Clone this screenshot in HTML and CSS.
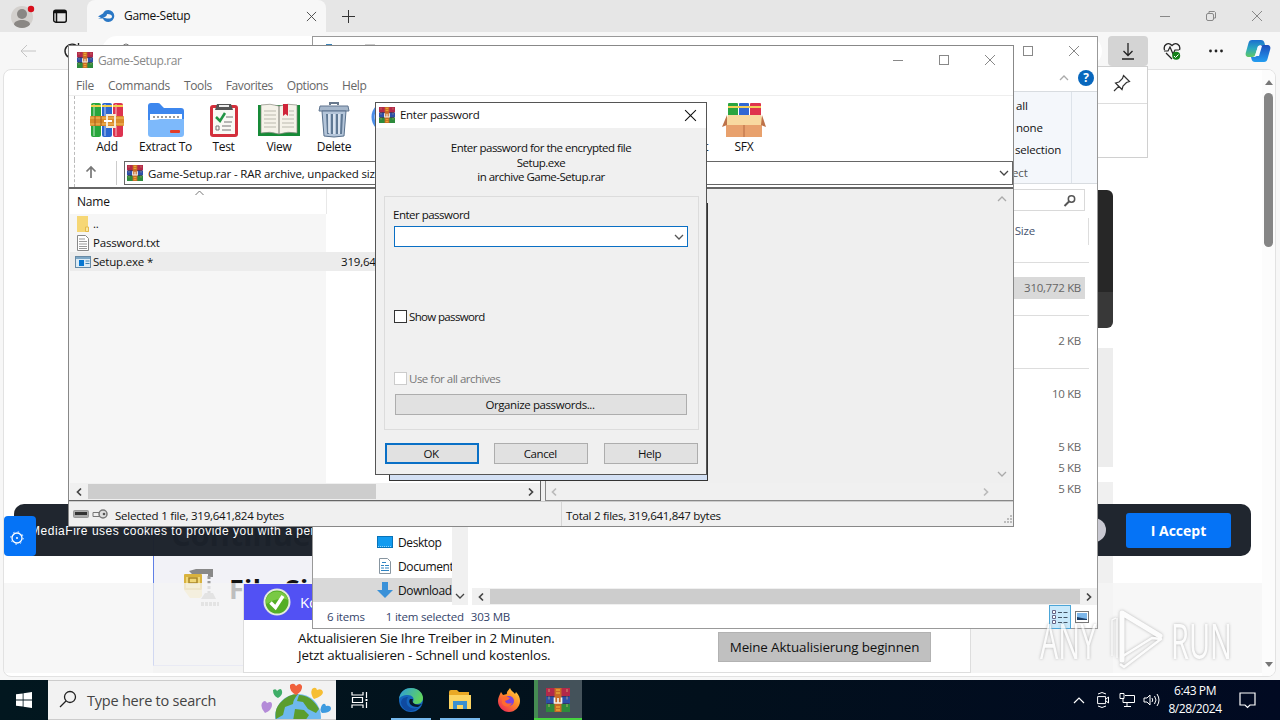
FILE: index.html
```html
<!DOCTYPE html>
<html lang="en">
<head>
  <meta charset="UTF-8">
  <meta name="viewport" content="width=device-width, initial-scale=1.0">
  <title>Game-Setup</title>
  <link rel="stylesheet" href="styles.css">
</head>
<body>
  <!-- shared icons -->
  <svg class="defs" width="0" height="0">
    <symbol id="rar" viewBox="0 0 24 24">
      <rect x="1" y="1" width="22" height="22" fill="#3a2330"/>
      <rect x="0" y="0" width="24" height="8" fill="#b3294a"/>
      <rect x="0" y="8.5" width="24" height="7" fill="#2d4fa8"/>
      <rect x="0" y="16" width="24" height="8" fill="#2d8a3c"/>
      <path d="M3 1v22M21 1v22" stroke="#e0c47a" stroke-opacity=".7" stroke-width="1" stroke-dasharray="3 4.5"/>
      <rect x="8.500" y="0" width="7" height="24" fill="#c96a25"/>
      <path d="M10 2h4M10 5h4M10 19h4M10 22h4" stroke="#f7c13c" stroke-width="1.2"/>
      <path d="M8.500 9.500v5.500h7V9.500M12 10v5" fill="none" stroke="#f4efe6" stroke-width="1.700"/>
    </symbol>
    <symbol id="close" viewBox="0 0 12 12"><path d="M1 1l10 10M11 1L1 11" fill="none" stroke="currentColor"/></symbol>
    <symbol id="max" viewBox="0 0 12 12"><rect x="1.5" y="1.5" width="9" height="9" fill="none" stroke="currentColor"/></symbol>
    <symbol id="min" viewBox="0 0 12 12"><path d="M1 6.5h10" stroke="currentColor"/></symbol>
    <symbol id="left" viewBox="0 0 12 12"><path d="M8 2.5L4.500 6 8 9.500" fill="none" stroke="currentColor" stroke-width="1.700"/></symbol>
    <symbol id="right" viewBox="0 0 12 12"><path d="M4 2.500L7.500 6 4 9.500" fill="none" stroke="currentColor" stroke-width="1.700"/></symbol>
    <symbol id="up" viewBox="0 0 12 12"><path d="M2 8l4-4 4 4" fill="none" stroke="currentColor" stroke-width="1.300"/></symbol>
    <symbol id="down" viewBox="0 0 12 12"><path d="M2 4l4 4 4-4" fill="none" stroke="currentColor" stroke-width="1.300"/></symbol>
  </svg>

  <div class="desktop">
    <!-- browser -->
    <div class="browser">
      <div class="tabstrip">
        <svg class="avatar" width="26" height="26" viewBox="0 0 26 26">
          <circle cx="12" cy="14" r="11" fill="#d3d0cd"/><circle cx="12" cy="11" r="5" fill="#8a8784"/>
          <path d="M4 21.500c0-6 16-6 16 0-3 4.500-13 4.500-16 0z" fill="#8a8784"/>
          <circle cx="21" cy="6" r="3.200" fill="#d80f1c"/>
        </svg>
        <svg class="tab-menu" width="16" height="16" viewBox="0 0 16 16"><rect x="1.700" y="2.200" width="12.600" height="12" rx="2" fill="none" stroke="#111" stroke-width="1.400"/><path d="M2 4.500h12M4.500 4v10" stroke="#111" stroke-width="1.500"/><path d="M2 3.500h12" stroke="#111" stroke-width="2"/></svg>
        <div class="tab">
          <svg width="17" height="14" viewBox="0 0 17 14"><path d="M0 7.500L5 4.500C6 2 8 1 10.300 1a6 6 0 0 1 0 12C7.500 13 6 11.500 5 9.500H0l3-1z" fill="#2b78c5"/><path d="M5 8.500q4-1 4-3.500 5 0 5 2.500T9 9.500z" fill="#f7f7f7"/></svg>
          <span class="tab-title">Game-Setup</span>
          <svg class="tab-close" width="11" height="11"><use href="#close"/></svg>
        </div>
        <svg class="new-tab" width="15" height="15" viewBox="0 0 15 15"><path d="M7.500 1v13M1 7.500h13" stroke="#333"/></svg>
        <div class="controls browser-controls">
          <svg width="12" height="12"><use href="#min"/></svg>
          <svg width="12" height="12" viewBox="0 0 12 12"><rect x="1.500" y="3.500" width="7" height="7" rx="1.500" fill="none" stroke="currentColor"/><path d="M4 3V1.500h5.500l1 1V8H9" fill="none" stroke="currentColor"/></svg>
          <svg width="12" height="12"><use href="#close"/></svg>
        </div>
      </div>
      <div class="toolbar">
        <svg class="back" width="16" height="14" viewBox="0 0 16 14"><path d="M16 7H1M7 1L1 7l6 6" fill="none" stroke="#c4c4c4"/></svg>
        <svg class="reload" width="18" height="18" viewBox="0 0 18 18"><path d="M15 5.500A7 7 0 1 0 16 9M15.500 1v5h-5" fill="none" stroke="#222" stroke-width="1.400"/></svg>
        <div class="address"><svg width="10" height="12" viewBox="0 0 10 12"><path d="M2 6V4a3 3 0 0 1 6 0v2M1 6h8v5H1z" fill="none" stroke="#777"/></svg></div>
        <div class="tools">
          <span class="tool-active"><svg width="16" height="20" viewBox="0 0 16 20"><path d="M8 2v12M3.500 10L8 14.500 12.500 10M2 18h12" fill="none" stroke="#222" stroke-width="1.300"/></svg></span>
          <svg class="heart" width="18" height="18" viewBox="0 0 18 18"><path d="M1.500 8C0 3 5-.5 9 3.500 13-.5 18 3 16.500 8M3 11l6 6" fill="none" stroke="#222" stroke-width="1.300"/><path d="M1 9h4l2-4 3 7 2-4h4" fill="none" stroke="#222" stroke-width="1.200"/><circle cx="13.200" cy="13.800" r="4" fill="#13801a"/><path d="M11 14l1.500 1.500 3-3" fill="none" stroke="#fff"/></svg>
          <svg class="dots" width="16" height="6" viewBox="0 0 16 6"><g fill="#222"><circle cx="2.500" cy="3" r="1.400"/><circle cx="8" cy="3" r="1.400"/><circle cx="13.500" cy="3" r="1.400"/></g></svg>
          <svg class="copilot" width="26" height="24" viewBox="0 0 26 24">
            <defs><linearGradient id="cp1" x2="0" y2="1"><stop stop-color="#1a6fd0"/><stop offset=".5" stop-color="#2aa8c0"/><stop offset="1" stop-color="#61c864"/></linearGradient><linearGradient id="cp2" x2="0" y2="1"><stop stop-color="#1b4dbb"/><stop offset="1" stop-color="#239df0"/></linearGradient></defs>
            <path d="M7 1h9c2 0 3 1 3.500 3l.5 2h-4c-2 0-3 1-3.500 3l-2 6c-.5 2-1.500 3-3.500 3H4c-3 0-4-2-3-5L3.500 4C4 2 5 1 7 1z" fill="url(#cp1)"/>
            <path d="M19 23h-9c-2 0-3-1-3.500-3L6 18h3c2 0 3-1 3.500-3l2-6c.5-2 1.500-3 3.500-3h4c3 0 4 2 3 5l-2.500 9c-.5 2-1.500 3-3.500 3z" fill="url(#cp2)"/>
            <path d="M13 7h4l-3 10h-4z" fill="#f5f9ff"/>
          </svg>
        </div>
      </div>
      <div class="viewport">
        <div class="page">
          <div class="hero"></div>
          <div class="side-panel"></div>
          <div class="download-card">
            <h2>Continue</h2>
            <div class="file-row">
              <svg width="40" height="38" viewBox="0 0 40 38"><path d="M7 2L14 0h17v8h-5V5H10z" fill="#888"/><rect x="2" y="5" width="18" height="16" rx="1" fill="#d9b23e"/><rect x="4" y="8" width="14" height="11" fill="#f0d778"/><rect x="7" y="9" width="8" height="5" fill="none" stroke="#a98627" stroke-width="1.500"/><path d="M2 21h18v6l-2 2H8z" fill="#f0dc98"/><path d="M27 7v18" stroke="#999" stroke-width="3" stroke-dasharray="3 2"/><path d="M23 24h8l3 6H19z" fill="#aaa"/><path d="M19 35h18" stroke="#aaa" stroke-width="4" stroke-dasharray="3 1"/></svg>
              <strong>File Size</strong>
            </div>
          </div>
          <div class="page-footer"></div>
        </div>
        <div class="page-scroll"><i class="tri-up"></i><b></b><i class="tri-down"></i></div>
      </div>
      <div class="downloads"><svg width="18" height="18" viewBox="0 0 18 18"><path d="M10.500 1.500l6 6-3 1-3.500 3.500-1 3.500-6.500-6.500 3.500-1L9.500 4.500zM5.700 12.300L1 17" fill="none" stroke="#333" stroke-width="1.200"/></svg></div>
      <div class="cookie">
        <p>MediaFire uses cookies to provide you with a personalized</p>
        <span class="cookie-more">:</span>
        <button>I Accept</button>
      </div>
      <div class="gear"><svg width="14" height="14" viewBox="0 0 14 14"><circle cx="7" cy="7" r="5" fill="none" stroke="#fff" stroke-width="1.300"/><circle cx="7" cy="7" r="6.200" fill="none" stroke="#fff" stroke-dasharray="1.500 3.370"/><circle cx="7" cy="7" r="1" fill="#fff"/></svg></div>
      <div class="advert">
        <div class="advert-head">
          <svg width="28" height="28" viewBox="0 0 28 28"><circle cx="14" cy="14" r="12.500" fill="#54ae26" stroke="#e4eadf" stroke-width="2"/><path d="M2.500 12a12 12 0 0 1 23 0c-7-3-16 0-22 4z" fill="#79c944"/><path d="M7.500 14.500l5 5L20 8" fill="none" stroke="#fff" stroke-width="3.500"/></svg>
          <span>Kostenlos</span>
        </div>
        <div class="advert-body">
          <p>Aktualisieren Sie Ihre Treiber in 2 Minuten.<br>Jetzt aktualisieren - Schnell und kostenlos.</p>
          <button>Meine Aktualisierung beginnen</button>
        </div>
      </div>
    </div>

    <!-- file explorer -->
    <div class="explorer">
      <div class="ex-title">
        <svg class="ex-icons" width="90" height="14" viewBox="0 0 90 14"><path d="M5 0h6v6h3l-6 6-6-6h3z" fill="#3a83b8"/><path d="M22 1v12" stroke="#aaa"/><path d="M44 12V1h10v11" fill="none" stroke="#999"/><path d="M65 1h12v12H65z" fill="#e8a33a"/></svg>
        <div class="controls ex-controls">
          <svg width="12" height="12"><use href="#max"/></svg>
          <svg width="12" height="12"><use href="#close"/></svg>
        </div>
      </div>
      <div class="ex-menu">
        <svg width="12" height="12"><use href="#up"/></svg>
        <span class="help">?</span>
      </div>
      <div class="ribbon"><ul><li>all</li><li>none</li><li>selection</li></ul><span class="ribbon-name">Select</span></div>
      <div class="ex-search"><span><svg width="14" height="14" viewBox="0 0 14 14"><circle cx="8.500" cy="5" r="3.200" fill="none" stroke="#555" stroke-width="1.500"/><path d="M6 7.500L1.500 12" stroke="#555" stroke-width="2"/></svg></span></div>
      <div class="ex-main">
        <div class="ex-tree">
          <div><svg width="16" height="14" viewBox="0 0 16 14"><rect x=".5" y="1.500" width="15" height="11" fill="#119bf0" stroke="#0873b8"/><path d="M1 11.500h14" stroke="#8fd3fb" stroke-dasharray="1 1"/></svg>Desktop</div>
          <div><svg width="16" height="16" viewBox="0 0 16 16"><path d="M2.500.5h8l3 3v12h-11z" fill="#fff" stroke="#8795a0"/><path d="M5 4.500h4M4 7.500h3M8 7.500h4M4 10h3M8 10h4M4 12.500h8" stroke="#2e83c2"/></svg>Documents</div>
          <div class="picked"><svg width="16" height="16" viewBox="0 0 16 16"><path d="M5 0h6v8h5l-8 8-8-8h5z" fill="#3a91d8"/></svg>Downloads</div>
        </div>
        <div class="ex-tree-scroll"><svg width="12" height="12"><use href="#down"/></svg></div>
        <div class="ex-files">
          <div class="col-head"><span>Size</span></div>
          <div class="group"><p class="chosen">310,772 KB</p></div>
          <div class="group"><p>2 KB</p></div>
          <div class="group last"><p>10 KB</p></div>
          <div class="group tight"><p>5 KB</p><p>5 KB</p><p>5 KB</p></div>
          <div class="hscroll ex-hscroll"><svg width="12" height="12"><use href="#left"/></svg><b></b><svg width="12" height="12"><use href="#right"/></svg></div>
        </div>
      </div>
      <div class="ex-status">
        <span>6 items</span><span>1 item selected</span><span>303 MB</span>
        <i class="view-on"><svg width="18" height="18" viewBox="0 0 18 18"><g fill="#fff" stroke="#668"><path d="M1.500 2.500h3v3h-3zM1.500 7.500h3v3h-3zM1.500 12.500h3v3h-3z"/></g><path d="M7 4.500h10M7 9.500h10M7 14.500h10" stroke="#456" stroke-dasharray="4 1.500"/></svg></i>
        <i class="view-off"><svg width="14" height="12" viewBox="0 0 14 12"><rect x=".5" y=".5" width="13" height="11" fill="#fff" stroke="#777"/><rect x="2" y="2" width="10" height="7" fill="#7db7ea"/><path d="M2 6l10 2v1H2z" fill="#1c3f67"/></svg></i>
      </div>
    </div>

    <!-- archive manager -->
    <div class="winrar">
      <div class="wr-title">
        <svg width="16" height="16"><use href="#rar"/></svg><span>Game-Setup.rar</span>
        <div class="controls wr-controls">
          <svg width="12" height="12"><use href="#min"/></svg>
          <svg width="12" height="12"><use href="#max"/></svg>
          <svg width="12" height="12"><use href="#close"/></svg>
        </div>
      </div>
      <div class="wr-menu"><span>File</span><span>Commands</span><span>Tools</span><span>Favorites</span><span>Options</span><span>Help</span></div>
      <div class="wr-tools">
        <div class="wr-tool t-add">
          <svg width="36" height="36" viewBox="0 0 36 36"><rect x="2" y="1" width="10" height="34" rx="2" fill="#28a63c"/><rect x="13" y="1" width="10" height="34" rx="2" fill="#2b66d0"/><rect x="24" y="1" width="10" height="34" rx="2" fill="#dd3350"/><path d="M5 2v32M16 2v32M27 2v32" stroke="#fff" stroke-opacity=".35" stroke-width="2"/><path d="M2 4h10M13 4h10M24 4h10" stroke="#f1cf4c" stroke-width="2"/><rect x="1" y="14" width="34" height="10" rx="1" fill="#d98a2b"/><path d="M1 16h34M1 22h34" stroke="#f5c063"/><path d="M6 14v10M12 14v10" stroke="#a45c16"/><rect x="18" y="13" width="8" height="12" fill="none" stroke="#f5ead4" stroke-width="2"/><path d="M15 19h8" stroke="#fff" stroke-width="2"/></svg><span>Add</span></div>
        <div class="wr-tool t-extract">
          <svg width="38" height="36" viewBox="0 0 38 36"><path d="M1 4q0-3 3-3h7q2 0 3 2l3 3h17q3 0 3 3v22H1z" fill="#3d87ee"/><path d="M3 12h32v14H3z" fill="#fff"/><path d="M6 15h26" stroke="#9a9a9a" stroke-width="2" stroke-dasharray="2 2"/><path d="M1 18q9 0 12-1h24v15q0 3-3 3H4q-3 0-3-3z" fill="#7db9fb"/><rect x="23" y="28" width="10" height="3" rx="1" fill="#e33c28"/></svg><span>Extract To</span></div>
        <div class="wr-tool t-test">
          <svg width="30" height="36" viewBox="0 0 30 36"><rect x="1" y="3" width="28" height="32" rx="3" fill="#d32f3b"/><path d="M4 6h22v26H4z" fill="#f9f9f4"/><path d="M8 2h14l2 6H6z" fill="#555"/><path d="M10 4h10" stroke="#eee" stroke-width="2"/><path d="M7 15l4 4 5-8" fill="none" stroke="#219544" stroke-width="2.500"/><path d="M17 15h7M15 20h8M13 24h9M13 28h9" stroke="#777"/><path d="M7 24h3v4H7z" fill="none" stroke="#777"/></svg><span>Test</span></div>
        <div class="wr-tool t-view">
          <svg width="44" height="36" viewBox="0 0 44 36"><path d="M1 3h42v31H1z" fill="#168a37"/><path d="M4 3q9-2 18 1 9-3 18-1v28q-9-2-18 1-9-3-18-1z" fill="#f5f2e9" stroke="#8a8a80" stroke-width=".7"/><path d="M22 4v28" stroke="#77766e"/><path d="M7 9h12M7 13h12M7 17h12M7 21h12M7 25h12M25 17h12M25 21h12M25 25h12M32 9h5M32 13h5" stroke="#bbb9ae"/><path d="M26 2h5v12l-2.500-2-2.500 2z" fill="#cf2439"/></svg><span>View</span></div>
        <div class="wr-tool t-delete">
          <svg width="32" height="36" viewBox="0 0 32 36"><path d="M12 3V1h8v2" fill="none" stroke="#68798d" stroke-width="2"/><path d="M2 4h28l1 5H1z" fill="#a6b7cb" stroke="#60758f"/><path d="M4 9h24l-2 25q-10 2-20 0z" fill="#b4c5d9" stroke="#58708c"/><path d="M9 12l1 20M14 12v20M19 12v20M24 12l-1 20" stroke="#607994" stroke-width="2"/><path d="M11 12v19M16 12v20M21 12v20" stroke="#e5edf6" stroke-width="1.500"/></svg><span>Delete</span></div>
        <div class="wr-tool t-find"><svg width="36" height="36" viewBox="0 0 36 36"><circle cx="17" cy="15" r="14" fill="#d9e9fb" stroke="#4c8ee8" stroke-width="3"/></svg><span>Find</span></div>
        <div class="wr-tool t-protect"><svg width="36" height="38" viewBox="0 0 36 38"><path d="M18 1l14 5v14q-2 10-14 16Q6 30 4 20V6z" fill="#8d98a5"/></svg><span>Protect</span></div>
        <div class="wr-tool t-sfx">
          <svg width="44" height="36" viewBox="0 0 44 36"><rect x="6" y="1" width="10" height="13" rx="1" fill="#2aa540"/><rect x="17" y="1" width="10" height="13" rx="1" fill="#3168d4"/><rect x="28" y="1" width="11" height="13" rx="1" fill="#df334d"/><path d="M6 5h33" stroke="#f3cf58" stroke-width="2"/><path d="M4 22h36v13H4z" fill="#e8a16d"/><path d="M6 13h33l3 10H3z" fill="#f8d9a0"/><path d="M5 13L0 25l5-2zM40 13l4 12-5-2z" fill="#bd7249"/><path d="M22 23v12" stroke="#b66b43"/></svg><span>SFX</span></div>
      </div>
      <div class="wr-address">
        <svg class="parent" width="12" height="14" viewBox="0 0 12 14"><path d="M6 13V2M1.500 6.500L6 2l4.500 4.500" fill="none" stroke="#777" stroke-width="1.700"/></svg>
        <div class="wr-path"><svg width="16" height="16"><use href="#rar"/></svg><span>Game-Setup.rar - RAR archive, unpacked size 319,641,847 bytes</span><svg class="drop" width="12" height="12"><use href="#down"/></svg></div>
      </div>
      <div class="wr-main">
        <div class="wr-list">
          <div class="wr-head"><span>Name</span><svg width="11" height="8" viewBox="0 0 11 8"><path d="M1.500 6l4-4 4 4" fill="none" stroke="#777"/></svg></div>
          <div class="wr-row"><svg width="16" height="16" viewBox="0 0 16 16"><path d="M2 0h11v12h1v4H2z" fill="#f6d775"/><path d="M10.500 11h3v4.500h-3z" fill="#fbe9a5" stroke="#e3b94c"/></svg>..</div>
          <div class="wr-row"><svg width="16" height="16" viewBox="0 0 16 16"><path d="M2.500.5h8l3 3v12h-11z" fill="#fff" stroke="#888"/><path d="M4 4h6M4 6.500h8M4 9h8M4 11.500h8M4 13.500h8" stroke="#999"/></svg>Password.txt</div>
          <div class="wr-row sel"><svg width="16" height="16" viewBox="0 0 16 16"><rect x=".5" y="2.500" width="15" height="11" fill="#dcebf5" stroke="#678aa5"/><path d="M1 3h14v2H1z" fill="#7da7c6"/><rect x="4" y="6" width="5" height="6" fill="#0877d1"/><path d="M10.500 7h4M10.500 9.500h4" stroke="#4485b4"/></svg>Setup.exe *<em>319,641,824</em></div>
          <div class="wr-fill"></div>
          <div class="hscroll"><svg width="12" height="12"><use href="#left"/></svg><b class="thumb"></b><svg class="end" width="12" height="12"><use href="#right"/></svg></div>
        </div>
        <div class="wr-comment">
          <div class="comment-body"><svg width="12" height="12"><use href="#up"/></svg><svg width="12" height="12"><use href="#down"/></svg></div>
          <div class="hscroll off"><svg width="12" height="12"><use href="#left"/></svg><svg class="end" width="12" height="12"><use href="#right"/></svg></div>
        </div>
      </div>
      <div class="wr-status">
        <div class="status-left"><svg width="36" height="12" viewBox="0 0 36 12"><rect x=".5" y="2.500" width="15" height="7" rx="1" fill="#aaa" stroke="#999"/><path d="M2 5.500h12" stroke="#333" stroke-width="3"/><path d="M20 4.500h9M20 8.500h8M20 4.500v4" stroke="#777" fill="none"/><circle cx="30" cy="6" r="4" fill="#ddd" stroke="#777" stroke-width="1.500"/><circle cx="31" cy="6" r="1.300" fill="#555"/></svg><span>Selected 1 file, 319,641,824 bytes</span></div>
        <div class="status-right"><span>Total 2 files, 319,641,847 bytes</span><svg width="9" height="9" viewBox="0 0 9 9"><path d="M7 1h2M4 4h2M7 4h2M1 7h2M4 7h2M7 7h2" stroke="#aaa" stroke-width="1.700"/></svg></div>
      </div>
    </div>

    <div class="progress"></div>

    <!-- password prompt -->
    <div class="dialog">
      <div class="dlg-title"><svg width="16" height="16"><use href="#rar"/></svg><span>Enter password</span><svg class="dlg-close" width="13" height="13"><use href="#close"/></svg></div>
      <p class="dlg-text">Enter password for the encrypted file<br>Setup.exe<br>in archive Game-Setup.rar</p>
      <div class="dlg-group">
        <label>Enter password</label>
        <div class="combo"><svg width="12" height="12"><use href="#down"/></svg></div>
        <div class="check show"><i></i><span>Show password</span></div>
        <div class="check all"><i></i><span>Use for all archives</span></div>
        <button class="organize">Organize passwords...</button>
      </div>
      <div class="dlg-buttons"><button class="ok">OK</button><button>Cancel</button><button>Help</button></div>
    </div>

    <!-- watermark -->
    <div class="watermark">
      <span>ANY</span>
      <svg width="58" height="64" viewBox="0 0 58 64"><path d="M15 52V5L53 28" fill="none" stroke="#fff" stroke-width="5" stroke-linejoin="round" stroke-linecap="round"/><path d="M5 48V12l4-2M10 50V10" fill="none" stroke="#fff" stroke-width="1.300"/><path d="M16 48L45 30l9 1L17 59l-4-3" fill="none" stroke="#fff" stroke-width="2.500" stroke-linejoin="round"/></svg>
      <span>RUN</span>
    </div>

    <!-- taskbar -->
    <div class="taskbar">
      <div class="start"><svg width="16" height="16" viewBox="0 0 16 16"><path d="M0 2.300L6.700 1.400v6.200H0zM7.500 1.300L16 0v7.600H7.500zM0 8.400h6.700v6.200L0 13.700zM7.500 8.400H16V16l-8.500-1.200z" fill="#fff"/></svg></div>
      <div class="search">
        <svg class="lens" width="18" height="18" viewBox="0 0 18 18"><circle cx="11" cy="7" r="5.500" fill="none" stroke="#222" stroke-width="1.300"/><path d="M7 11l-6 6" stroke="#222" stroke-width="1.300"/></svg>
        <span>Type here to search</span>
        <svg class="earth" width="74" height="38" viewBox="0 0 74 38">
          <circle cx="37" cy="36" r="23" fill="#6eb9ee"/>
          <path d="M19 22q8-9 18-9-5 6-5 10l-8 3-2 8-7 4q-2-9 4-16zM38 14q12 0 20 14l-3 4-8-4-5-7-6-1zM34 28l9 1 5 5-4 6H32z" fill="#5b9d2e"/>
          <path d="M1 22q3-4 5 0 5-3 5 2 0 5-7 8-5-5-3-10z" fill="#b48bd8"/>
          <path d="M12 9q3-2 4 1 4-4 5 0 1 4-4 7-5-2-5-8z" fill="#3fae68"/>
          <path d="M29 4q4-3 6 1 4-4 6 0 1 5-6 9-7-4-6-10z" fill="#f0613d"/>
          <path d="M51 8q4-3 5 1 5-2 6 2 0 4-9 7-4-5-2-10z" fill="#f6be33"/>
          <path d="M61 24q3-3 4 1 5-1 5 3-1 4-9 4-3-3 0-8z" fill="#3d9be0"/>
        </svg>
      </div>
      <div class="task view"><svg width="18" height="18" viewBox="0 0 18 18"><path d="M1 1v3h11V1M1 17v-3h11v3M1.500 6.500h10v5h-10zM15.500 1v6M15.500 11v6" fill="none" stroke="#fff" stroke-width="1.200"/><path d="M14.500 8h2v2h-2z" fill="#fff"/></svg></div>
      <div class="task open"><svg width="26" height="26" viewBox="0 0 26 26"><defs><linearGradient id="eg" x2="1" y2=".4"><stop stop-color="#2b9ae0"/><stop offset="1" stop-color="#5fd35f"/></linearGradient></defs><circle cx="13" cy="13" r="12" fill="#1565bd"/><path d="M1 12C2 4 8 1 13 1c8 0 12 6 12 10 0 5-4 6-7 6-2 0-4-1-3-2 2-4-1-7-5-7-5 0-8 2-9 4z" fill="url(#eg)"/><path d="M9 12c-2 6 3 11 11 9-6 5-15 4-17-5 0-4 3-6 7-6z" fill="#0f4aa0"/><path d="M12 12c-2 3 0 8 8 8l4-3c-6 2-11-1-9-5z" fill="#07182a"/></svg></div>
      <div class="task open"><svg width="22" height="20" viewBox="0 0 22 20"><path d="M0 2q0-2 2-2h6l2 2h10v16H0z" fill="#e9a825"/><path d="M0 5h22v14H0z" fill="#fcd462"/><path d="M4 19v-8h14v8h-4v-4H8v4z" fill="#3c8fd1"/></svg></div>
      <div class="task"><svg width="24" height="24" viewBox="0 0 24 24"><defs><linearGradient id="ff" x1="1" x2=".2" y2="1"><stop stop-color="#ffe14a"/><stop offset=".5" stop-color="#ff8a26"/><stop offset="1" stop-color="#ec2857"/></linearGradient></defs><path d="M4 4l2 3 4-1c-1-2 2-4 3-6 1 3 4 4 5 6l1-2c3 3 4 6 4 9 0 6-5 11-11 11S1 19 1 13c0-3 1-5 3-9z" fill="url(#ff)"/><circle cx="12" cy="13" r="5" fill="#7a43dd"/><path d="M5 9c4-2 6 0 8 1-1 2-4 2-5 3 1 3 4 3 7 2-2 5-9 4-10 0z" fill="#ff6a30"/></svg></div>
      <div class="task active"><svg width="24" height="24"><use href="#rar"/></svg></div>
      <div class="tray">
        <svg width="12" height="8" viewBox="0 0 12 8"><path d="M1 7l5-5 5 5" fill="none" stroke="#fff" stroke-width="1.200"/></svg>
        <svg width="12" height="16" viewBox="0 0 12 16"><path d="M.6 4.600h8v7h-8zM9 7l2.500-2v6L9 9M1 2q4-3 8 0M1 14q4 3 8 0" fill="none" stroke="#fff"/></svg>
        <svg width="16" height="14" viewBox="0 0 16 14"><path d="M6 2.500h9.500v7H4V6M1 .5h4v5H1zM8 10v3M5 13.500h7" fill="none" stroke="#fff"/></svg>
        <svg width="17" height="14" viewBox="0 0 17 14"><path d="M1 5h3l3-3v10L4 9H1zM9 5q1.500 2 0 4M11.500 3q3 4 0 8M14 1q4 6 0 12" fill="none" stroke="#fff"/></svg>
      </div>
      <div class="clock">6:43 PM<br>8/28/2024</div>
      <svg class="notes" width="17" height="17" viewBox="0 0 17 17"><path d="M1 1h15v12h-5l-2.500 2.500L6 13H1z" fill="none" stroke="#fff" stroke-width="1.200"/></svg>
    </div>
  </div>
</body>
</html>
```
FILE: styles.css
```css
* {
  box-sizing: border-box;
}

body {
  margin: 0;
  overflow: hidden;
  font-family: "Open Sans", "Noto Sans", sans-serif;
  font-size: 11.5px;
  letter-spacing: -0.2px;
  color: #111;
}

p, h2, ul {
  margin: 0;
  padding: 0;
}

svg {
  display: block;
  flex: none;
}

span {
  white-space: nowrap;
}

button {
  font: inherit;
  letter-spacing: inherit;
  color: inherit;
  padding: 0;
}

.defs {
  position: absolute;
}

.desktop {
  position: relative;
  width: 1280px;
  height: 720px;
  overflow: hidden;
}

.controls {
  display: flex;
  gap: 34px;
  margin-left: auto;
  color: #888;
}

/* browser */
.browser {
  height: 680px;
  display: flex;
  flex-direction: column;
  background: #f7f7f7;
}

.tabstrip {
  height: 32px;
  display: flex;
  align-items: center;
  background: #e6e6e6;
}

.avatar {
  margin-left: 10px;
}

.tab-menu {
  margin-left: 16px;
}

.tab {
  width: 239px;
  height: 32px;
  margin-left: 19px;
  padding: 0 9px 0 11px;
  display: flex;
  align-items: center;
  background: #f7f7f7;
  border-radius: 8px 8px 0 0;
}

.tab-title {
  margin: -1px 0 0 9px;
  font-size: 12px;
  letter-spacing: -0.3px;
}

.tab-close {
  margin-left: auto;
  color: #444;
}

.new-tab {
  margin-left: 15px;
}

.browser-controls {
  margin-right: 17px;
}

.toolbar {
  height: 37px;
  display: flex;
  align-items: center;
}

.back {
  margin-left: 20px;
}

.reload {
  margin-left: 27px;
}

.address {
  width: 1000px;
  height: 30px;
  margin-left: 21px;
  padding: 7px 19px;
  background: #fff;
  border-radius: 15px;
}

.tools {
  display: flex;
  align-items: center;
  flex: 1;
  margin-left: 6px;
}

.tool-active {
  width: 40px;
  height: 30px;
  display: flex;
  align-items: center;
  justify-content: center;
  background: #d4d4d4;
  border-radius: 4px;
}

.heart {
  margin-left: 15px;
}

.dots {
  margin-left: 27px;
}

.copilot {
  margin-left: 21px;
}

.viewport {
  width: 1273px;
  height: 608px;
  margin-left: 3px;
  display: flex;
  background: #fff;
  border: 1px solid #e2e2e2;
  border-radius: 8px;
  overflow: hidden;
}

.page {
  width: 1258px;
  display: grid;
  grid-template-columns: 149px 960px 1fr;
  grid-template-rows: 120px 138px 20px 235px 90px;
}

.hero {
  grid-area: 2 / 2 / 3 / 3;
  background: linear-gradient(#272727 102px, #383838 102px);
  border-radius: 6px;
}

.side-panel {
  grid-area: 4 / 2 / 6 / 3;
  background: linear-gradient(#ededed 119px, #fff 119px, #fff 134px, #f0f0f0 134px);
}

.download-card {
  grid-area: 4 / 2 / 6 / 3;
  width: 500px;
  height: 318px;
  padding: 165px 0 0 17px;
  background: #f2f2f7;
  border: 1px solid #c4caf0;
  border-left-color: #5f7fe6;
}

.download-card h2 {
  font: 700 31px/40px "Open Sans", sans-serif;
}

.file-row {
  display: flex;
  margin: 15px 0 0 11px;
}

.file-row strong {
  margin: 2px 0 0 7px;
  font-size: 27px;
  line-height: 36px;
  letter-spacing: 0.3px;
}

.page-footer {
  grid-area: 5 / 1 / 6 / 4;
  background: rgba(245, 245, 245, 0.76);
}

.page-scroll {
  flex: 1;
  display: flex;
  flex-direction: column;
  align-items: center;
  padding: 10px 0 9px;
  background: #fcfcfc;
}

.page-scroll b {
  width: 9px;
  height: 154px;
  margin: 8px 0 auto;
  background: #858585;
  border-radius: 5px;
}

.tri-up, .tri-down {
  border: 4px solid transparent;
}

.tri-up {
  border-top: 0;
  border-bottom: 5px solid #777;
}

.tri-down {
  border-bottom: 0;
  border-top: 5px solid #777;
}

.downloads {
  position: absolute;
  left: 850px;
  top: 66px;
  width: 298px;
  height: 92px;
  padding: 7px 16px;
  background: linear-gradient(#fff 36px, #ddd 36px, #ddd 37px, #fff 37px);
  border: 1px solid #d0d0d0;
}

.downloads svg {
  margin-left: auto;
}

.cookie {
  position: absolute;
  left: 14px;
  top: 504px;
  width: 1237px;
  height: 52px;
  padding: 0 20px 0 16px;
  display: flex;
  align-items: center;
  background: rgba(28, 34, 43, 0.98);
  border-radius: 10px;
  color: #fff;
}

.cookie p {
  font: 12px "Liberation Sans", Arial, sans-serif;
  letter-spacing: 0.52px;
  padding-top: 2px;
}

.cookie-more {
  width: 24px;
  height: 24px;
  margin-left: auto;
  border-radius: 50%;
  background: #c9c9d2;
  color: #222;
  font: 700 14px/23px "Open Sans", sans-serif;
  text-align: center;
}

.cookie button {
  width: 105px;
  height: 35px;
  margin-left: 20px;
  background: #0573f6;
  border: 0;
  border-radius: 3px;
  font: 700 14px "Open Sans", sans-serif;
  letter-spacing: 0;
}

.gear {
  position: absolute;
  left: 4px;
  top: 516px;
  width: 32px;
  height: 40px;
  display: flex;
  align-items: center;
  justify-content: center;
  padding: 3px 6px 0 0;
  background: #0573f6;
  border-radius: 4px;
}

.advert {
  position: absolute;
  left: 243px;
  top: 584px;
  width: 728px;
  height: 89px;
  background: #fff;
  border: 1px solid #ddd;
  border-top: 0;
}

.advert-head {
  height: 36px;
  padding-left: 19px;
  display: flex;
  align-items: center;
  background: #5251f4;
  color: #fff;
  font-size: 15px;
}

.advert-head span {
  margin-left: 9px;
}

.advert-body {
  display: flex;
  align-items: flex-start;
  padding: 10px 39px 0 54px;
  font-size: 13.4px;
  line-height: 17px;
  letter-spacing: -0.2px;
}

.advert-body button {
  width: 213px;
  height: 30px;
  margin: 2px 0 0 auto;
  background: #c0c0c0;
  border: 1px solid #b2b2b2;
  letter-spacing: -0.13px;
}

/* explorer */
.explorer {
  position: absolute;
  left: 312px;
  top: 36px;
  width: 786px;
  height: 593px;
  display: flex;
  flex-direction: column;
  background: #fff;
  border: 1px solid #999;
}

.ex-title {
  height: 28px;
  display: flex;
  align-items: center;
}

.ex-icons {
  margin-left: 8px;
}

.ex-controls {
  margin-right: 17px;
}

.ex-menu {
  height: 26px;
  display: flex;
  align-items: center;
  justify-content: flex-end;
  gap: 8px;
  padding: 0 3px 1px 0;
  color: #aaa;
}

.help {
  width: 16px;
  height: 16px;
  border-radius: 50%;
  background: #0867bd;
  color: #fff;
  font-weight: 700;
  font-size: 12px;
  line-height: 16px;
  text-align: center;
}

.ribbon {
  height: 93px;
  padding-left: 703px;
  background: linear-gradient(90deg, #f4f7fb 758px, #dde3ea 758px, #dde3ea 759px, #f4f7fb 759px);
  border-top: 1px solid #d8dce0;
  border-bottom: 1px solid #d8dce0;
  letter-spacing: -0.2px;
}

.ribbon ul {
  list-style: none;
  padding-top: 3px;
  line-height: 22px;
}

.ribbon li:nth-child(3) {
  margin-left: -1px;
}

.ribbon-name {
  display: block;
  margin-left: -19px;
  color: #555;
  line-height: 22px;
  padding-top: 1px;
}

.ex-search {
  display: flex;
  justify-content: flex-end;
  padding: 5px 12px 0 0;
}

.ex-search span {
  width: 220px;
  height: 22px;
  padding: 4px 7px;
  border: 1px solid #d9d9d9;
}

.ex-search svg {
  margin-left: auto;
}

.ex-main {
  flex: 1;
  min-height: 0;
  display: flex;
}

.ex-tree {
  width: 139px;
  display: flex;
  flex-direction: column;
  justify-content: flex-end;
  padding-bottom: 3px;
  overflow: hidden;
}

.ex-tree div {
  height: 24px;
  padding-left: 64px;
  display: flex;
  align-items: center;
  gap: 5px;
  font-size: 12px;
  letter-spacing: -0.4px;
}

.ex-tree .picked {
  background: #d9d9d9;
}

.ex-tree-scroll {
  width: 16px;
  display: flex;
  align-items: flex-end;
  justify-content: center;
  padding-bottom: 3px;
  background: #f0f0f0;
  color: #444;
}

.ex-files {
  flex: 1;
  display: flex;
  flex-direction: column;
  padding-left: 4px;
  color: #666;
  text-align: right;
}

.col-head {
  height: 52px;
  margin-right: 8px;
  padding: 7px 0 18px;
  border-bottom: 1px solid #ddd;
  color: #44536f;
}

.col-head span {
  display: block;
  height: 27px;
  padding: 5px 53px 0 0;
  border-right: 1px solid #ddd;
}

.group {
  height: 53px;
  margin-right: 8px;
  padding: 14px 4px 0 0;
  border-bottom: 1px solid #ddd;
  line-height: 22px;
  letter-spacing: -0.3px;
}

.group p {
  padding-right: 4px;
}

.group .chosen {
  background: #d9d9d9;
}

.group.last {
  border: 0;
}

.group.tight {
  height: auto;
  border: 0;
  line-height: 21px;
}

.hscroll {
  height: 17px;
  display: flex;
  align-items: center;
  padding: 0 3px;
  background: #f0f0f0;
  color: #444;
}

.hscroll b {
  height: 15px;
  margin: 0 3px;
  background: #cdcdcd;
}

.hscroll .end {
  margin-left: auto;
}

.ex-hscroll {
  margin-top: auto;
  padding-right: 2px;
}

.ex-hscroll b {
  flex: 1;
}

.ex-status {
  height: 23px;
  display: flex;
  align-items: center;
  padding-left: 14px;
  color: #34446a;
}

.ex-status span:nth-child(2) {
  margin-left: 21px;
}

.ex-status span:nth-child(3) {
  margin-left: 7px;
}

.view-on {
  margin-left: auto;
  padding: 2px 1px;
  background: #c9e9fb;
  border: 1px solid #4ca6d8;
}

.view-off {
  margin: 0 8px 0 4px;
}

/* archive manager */
.winrar {
  position: absolute;
  left: 68px;
  top: 45px;
  width: 946px;
  height: 482px;
  display: flex;
  flex-direction: column;
  background: #fff;
  border: 1px solid #888;
}

.wr-title {
  height: 28px;
  display: flex;
  align-items: center;
  padding-left: 8px;
  color: #888;
}

.wr-title span {
  margin-left: 5px;
  font-size: 12px;
  letter-spacing: -0.4px;
}

.wr-controls {
  margin-right: 17px;
}

.wr-menu {
  height: 22px;
  padding: 2px 0 0 7px;
  display: flex;
  align-items: center;
  gap: 14px;
  color: #666;
  font-size: 12px;
  letter-spacing: -0.42px;
  border-bottom: 1px solid #eee;
}

.wr-menu span:nth-child(-n+2) {
  letter-spacing: -0.25px;
}

.wr-tools {
  height: 64px;
  margin-left: 5px;
  padding: 6px 0 0 0;
  display: flex;
  border-left: 1px dashed #bbb;
}

.wr-tool {
  display: flex;
  flex-direction: column;
  align-items: center;
  gap: 1px;
  font-size: 12px;
  line-height: 16px;
  letter-spacing: -0.3px;
}

.t-add { width: 64px; }
.t-extract { width: 53px; }
.t-test { width: 63px; }
.t-view { width: 48px; }
.t-delete { width: 62px; }
.t-find { width: 46px; }

.t-protect {
  width: 44px;
  margin: -1px 0 0 256px;
}

.t-protect svg {
  margin-bottom: -1px;
}

.t-sfx {
  width: 44px;
  margin-left: 11px;
}

.wr-address {
  height: 27px;
  margin-left: 5px;
  padding-top: 1px;
  display: flex;
  border-left: 1px dashed #bbb;
}

.parent {
  margin: 4px 0 0 10px;
}

.wr-path {
  width: 889px;
  height: 24px;
  margin-left: auto;
  padding: 0 2px;
  display: flex;
  align-items: center;
  border: 1px solid #666;
  box-shadow: -7px 0 #fff, -8px 0 #ccc;
}

.wr-path span {
  margin-left: 5px;
  letter-spacing: -0.16px;
}

.drop {
  margin-left: auto;
  color: #444;
}

.wr-main {
  height: 314px;
  display: flex;
  gap: 4px;
  background: #f0f0f0;
}

.wr-list {
  width: 472px;
  border: 1px solid #666;
  border-left: 0;
  border-top-width: 2px;
  padding-left: 1px;
  background: linear-gradient(90deg, #f6f6f6 257px, #fff 257px);
  display: flex;
  flex-direction: column;
}

.wr-head {
  height: 25px;
  display: flex;
  padding: 4px 0 0 7px;
  background: linear-gradient(90deg, #fff 256px, #e8e8e8 256px, #e8e8e8 257px, #fff 257px);
}

.wr-head span {
  font-size: 12px;
  width: 117px;
}

.wr-head svg {
  margin-top: -4px;
}

.wr-row {
  height: 19px;
  display: flex;
  align-items: center;
  padding-left: 5px;
  gap: 2px;
}

.wr-row em {
  font-style: normal;
  margin-left: 186px;
}

.wr-row.sel {
  background: #ececec;
}

.wr-fill {
  flex: 1;
}

.thumb {
  width: 288px;
}

.wr-comment {
  flex: 1;
  display: flex;
  flex-direction: column;
  border: 1px solid #888;
  border-top: 2px solid #666;
  border-right: 0;
  background: #efefef;
}

.comment-body {
  flex: 1;
  display: flex;
  flex-direction: column;
  justify-content: space-between;
  align-items: flex-end;
  padding: 4px 5px 3px;
  color: #aaa;
}

.hscroll.off {
  color: #bbb;
  padding: 0 21px 0 2px;
}

.wr-status {
  flex: 1;
  display: flex;
  background: #f0f0f0;
  border-top: 1px solid #ccc;
}

.status-left {
  width: 493px;
  display: flex;
  align-items: center;
  padding: 2px 0 0 4px;
  gap: 6px;
  border-right: 1px solid #d5d5d5;
  letter-spacing: -0.23px;
}

.status-left svg {
  margin-top: -3px;
}

.status-right {
  flex: 1;
  display: flex;
  align-items: center;
  padding: 2px 0 0 4px;
  letter-spacing: -0.28px;
}

.status-right svg {
  margin: 8px 1px 0 auto;
}

.progress {
  position: absolute;
  left: 389px;
  top: 203px;
  width: 319px;
  height: 278px;
  background: #d3e0f4;
  border: 1px solid #333;
}

/* password dialog */
.dialog {
  position: absolute;
  left: 375px;
  top: 102px;
  width: 332px;
  height: 373px;
  background: #f0f0f0;
  border: 1px solid #555;
  letter-spacing: -0.5px;
}

.dlg-title {
  height: 25px;
  padding: 0 9px 1px 3px;
  display: flex;
  align-items: center;
  background: #fff;
}

.dlg-title span {
  margin: -1px 0 0 5px;
  letter-spacing: -0.3px;
}

.dlg-close {
  margin-left: auto;
}

.dlg-text {
  padding-top: 13px;
  text-align: center;
  line-height: 14.6px;
}

.dlg-group {
  width: 315px;
  height: 234px;
  margin: 11px 0 0 8px;
  padding: 10px 10px 0 9px;
  border: 1px solid #dcdcdc;
}

.dlg-group label {
  display: block;
  margin-left: -1px;
  line-height: 16px;
}

.combo {
  height: 21px;
  margin-top: 3px;
  padding: 4px 2px;
  background: #fff;
  border: 1px solid #0a6fc4;
  color: #555;
}

.combo svg {
  margin-left: auto;
}

.check {
  display: flex;
  align-items: center;
  gap: 2px;
  height: 16px;
}

.check i {
  width: 13px;
  height: 13px;
  background: #fff;
  border: 1px solid #333;
}

.show {
  margin-top: 62px;
  letter-spacing: -0.65px;
}

.all {
  margin-top: 46px;
  color: #777;
}

.all i {
  border-color: #ccc;
}

.dialog button {
  height: 21px;
  padding-right: 2px;
  background: #e1e1e1;
  border: 1px solid #adadad;
  letter-spacing: -0.4px;
}

.dialog .organize {
  display: block;
  width: 292px;
  margin: 7px 0 0 1px;
}

.dlg-buttons {
  display: flex;
  gap: 15.3px;
  padding: 13px 0 0 9px;
}

.dlg-buttons button {
  width: 94px;
}

.dialog .ok {
  border: 2px solid #0a70c6;
}

/* watermark */
.watermark {
  position: absolute;
  left: 1040px;
  top: 608px;
  display: flex;
  align-items: center;
  gap: 6px;
  color: #fff;
  font-size: 50px;
  font-weight: 400;
  line-height: 62px;
  letter-spacing: 0;
  opacity: 0.7;
  filter: drop-shadow(0 0 1.5px #999);
}

.watermark span {
  width: 61px;
  transform: scaleX(0.58);
  transform-origin: left;
}

/* taskbar */
.taskbar {
  height: 40px;
  display: flex;
  align-items: center;
  background: linear-gradient(90deg, #02171f, #02101c 55%, #010a22);
  color: #fff;
}

.start {
  width: 48px;
  display: flex;
  justify-content: center;
}

.search {
  width: 288px;
  height: 40px;
  display: flex;
  align-items: center;
  padding: 0 1px 0 11px;
  background: #f2f2f2;
  border: 1px solid #ccc;
  border-width: 1px 0;
  color: #444;
  font-size: 14.5px;
  letter-spacing: -0.23px;
}

.lens {
  margin-top: -2px;
}

.search span {
  margin-left: 10px;
}

.earth {
  margin-left: auto;
}

.task {
  width: 48px;
  height: 40px;
  margin-right: 1px;
  display: flex;
  align-items: center;
  justify-content: center;
}

.task.view {
  margin-right: 3px;
}

.task.open {
  box-shadow: inset 0 -2px #76b9ed;
  width: 40px;
  margin: 0 5px 0 4px;
}

.task.active {
  background: #44525a;
  box-shadow: inset 0 -2px #46d33f, inset 4px 0 #458c53;
}

.tray {
  display: grid;
  grid-template-columns: repeat(4, 24px);
  align-items: center;
  justify-items: center;
  margin-left: auto;
}

.clock {
  width: 70px;
  margin-left: -3px;
  font-size: 12px;
  line-height: 18px;
  text-align: center;
  letter-spacing: -0.4px;
}

.notes {
  margin: 0 24px 0 9px;
}
```
